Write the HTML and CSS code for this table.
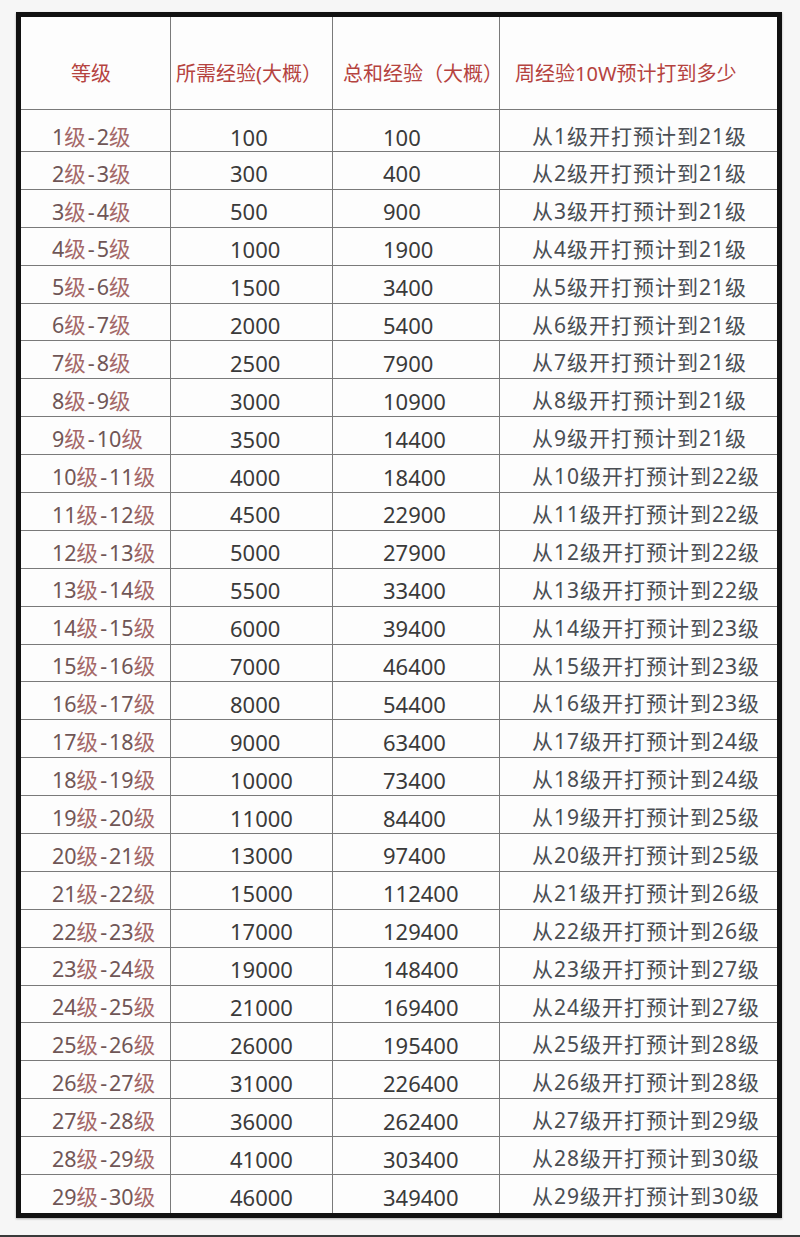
FILE: index.html
```html
<!DOCTYPE html>
<html lang="zh">
<head>
<meta charset="utf-8">
<link rel="stylesheet" href="styles.css">
</head>
<body>
<div class="page">
  <div class="sheet" id="sheet">
    <div class="cell head c1">等级</div>
    <div class="cell head c2">所需经验(大概）</div>
    <div class="cell head c3">总和经验（大概）</div>
    <div class="cell head c4">周经验10W预计打到多少</div>
  </div>
</div>
<script>
var need=[100,300,500,1000,1500,2000,2500,3000,3500,4000,4500,5000,5500,6000,7000,8000,9000,10000,11000,13000,15000,17000,19000,21000,26000,31000,36000,41000,46000];
var target=[21,21,21,21,21,21,21,21,21,22,22,22,22,23,23,23,24,24,25,25,26,26,27,27,28,28,29,30,30];
var sheet=document.getElementById('sheet');
var total=0,html='';
for(var i=0;i<need.length;i++){
  total+=need[i];
  var a=i+1,b=i+2,cls=(i===need.length-1)?' last':(i===0?' first':'');
  html+='<div class="cell lv c1'+cls+'">'+a+'<span class="ji">级</span><span class="dash">-</span>'+b+'<span class="ji">级</span></div>'+
        '<div class="cell num c2'+cls+'">'+need[i]+'</div>'+
        '<div class="cell num c3'+cls+'">'+total+'</div>'+
        '<div class="cell est c4'+cls+'">从'+a+'级开打预计到'+target[i]+'级</div>';
}
sheet.insertAdjacentHTML('beforeend',html);
</script>
</body>
</html>
```
FILE: styles.css
```css
html, body {
  margin: 0;
  padding: 0;
}
body {
  background: #f6f6f6;
  font-family: "Noto Sans", "Noto Sans CJK SC", sans-serif;
  width: 800px;
  height: 1237px;
  overflow: hidden;
  position: relative;
}
body::after {
  content: "";
  position: absolute;
  left: 0;
  right: 0;
  bottom: 0;
  height: 2px;
  background: #3a3a3a;
}
.page {
  padding: 12px 0 0 16px;
}
.sheet {
  width: 756px;
  border: 5px solid #111;
  background: #fdfdfd;
  display: grid;
  grid-template-columns: 150px 162px 167px 1fr;
  grid-template-rows: 93px 42px repeat(28, 37.9px);
  box-shadow: 0 1px 2px rgba(0,0,0,0.3);
}
.cell {
  box-sizing: border-box;
  border-right: 1px solid #7a7a7a;
  border-bottom: 1px solid #7a7a7a;
  display: flex;
  align-items: center;
  white-space: nowrap;
  font-size: 21px;
  line-height: 1;
  padding-top: 6px;
}
.cell.first { padding-top: 12px; }
.c4 { border-right: none; }
.last { border-bottom: none; }
.head {
  color: #b5433f;
  font-size: 20px;
  padding-top: 22px;
}
.head.c1 { padding-left: 50px; }
.head.c2 { padding-left: 5px; }
.head.c3 { padding-left: 10px; }
.head.c4 { padding-left: 15px; }
.lv {
  color: #6f5656;
  padding-left: 31px;
  font-size: 21.5px;
}
.ji { color: #a46868; }
.dash { padding: 0 2px; }
.num {
  color: #3a3a3a;
  font-size: 22px;
}
.num.c2 { padding-left: 59px; }
.num.c3 { padding-left: 50px; }
.est {
  color: #4a4e54;
  padding-left: 32px;
  letter-spacing: 1px;
}
```
